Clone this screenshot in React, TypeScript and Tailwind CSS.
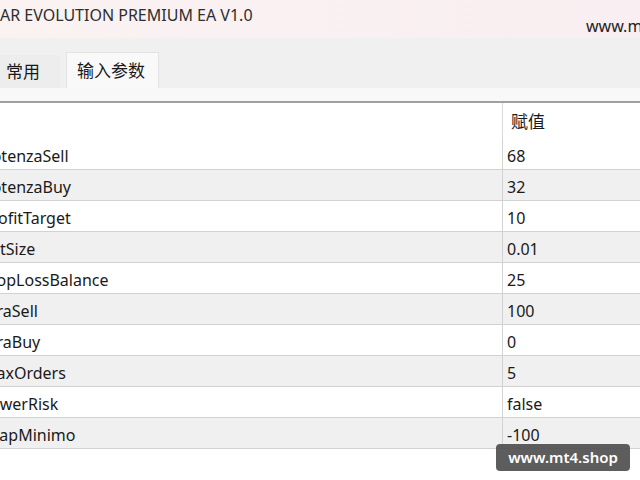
const rows = [
  { name: 'PotenzaSell', value: '68', off: '-ml-[18px]' },
  { name: 'PotenzaBuy', value: '32', off: '-ml-[18px]' },
  { name: 'ProfitTarget', value: '10', off: '-ml-[18px]' },
  { name: 'LotSize', value: '0.01', off: '-ml-[18px]' },
  { name: 'StopLossBalance', value: '25', off: '-ml-[18px]' },
  { name: 'StraSell', value: '100', off: '-ml-[18px]' },
  { name: 'StraBuy', value: '0', off: '-ml-[18px]' },
  { name: 'MaxOrders', value: '5', off: '-ml-[18px]' },
  { name: 'LowerRisk', value: 'false', off: '-ml-[18px]' },
  { name: 'SwapMinimo', value: '-100', off: '-ml-[22px]' },
]

export default function App() {
  return (
    <div
      className="relative h-[480px] w-[640px] overflow-hidden bg-white text-[#1a1a1a]"
      style={{ fontFamily: '"Noto Sans", "Noto Sans CJK SC", sans-serif' }}
    >
      {/* Window title */}
      <div className="flex h-[38px] bg-gradient-to-r from-[#faf3f2] to-[#f9eef1]">
        <div className="whitespace-nowrap pt-[3px] text-[16px] text-[#2e2e2e]">
          AR EVOLUTION PREMIUM EA V1.0
        </div>
        <div className="ml-auto w-[54px] overflow-hidden whitespace-nowrap pt-[14px] text-[16px] text-[#222]">
          www.mt4.shop
        </div>
      </div>

      {/* Tabs */}
      <div className="flex h-[50px] items-end bg-[#f0f0f0]">
        <div className="flex h-[33px] w-[60px] items-center pl-[6px] text-[17px] bg-[#ededed]">
          常用
        </div>
        <div className="ml-[6px] flex h-[36px] w-[93px] items-center border border-b-0 border-[#e3e3e3] bg-[#f9f9f9] pl-[10px] text-[17px]">
          输入参数
        </div>
      </div>
      <div className="h-[15px] border-b-2 border-[#a0a0a0] bg-[#f8f8f8]" />

      {/* Parameter table */}
      <div className="grid grid-cols-[502px_1fr]">
        <div className="h-[36px]" />
        <div className="flex h-[36px] items-center border-l border-[#dadada] pl-[8px] pt-[2px] text-[17px]">
          赋值
        </div>
        {rows.map((r, i) => (
          <div key={r.name} className="contents">
            <div
              className={`flex h-[31px] items-center overflow-hidden border-b border-[#d2d2d2] pt-[3px] text-[16px] ${
                i % 2 ? 'bg-[#f0f0f0]' : 'bg-white'
              }`}
            >
              <span className={`${r.off} whitespace-nowrap`}>{r.name}</span>
            </div>
            <div
              className={`flex h-[31px] items-center border-b border-l border-[#d2d2d2] pl-[4px] pt-[3px] text-[16px] ${
                i % 2 ? 'bg-[#f0f0f0]' : 'bg-white'
              }`}
            >
              {r.value}
            </div>
          </div>
        ))}
      </div>

      {/* Watermark */}
      <div className="absolute left-[496px] top-[444px] flex h-[27px] w-[134px] items-center justify-center rounded-[4px] bg-[#4b4b4b]/90 text-[15px] font-semibold text-white">
        www.mt4.shop
      </div>
    </div>
  )
}
